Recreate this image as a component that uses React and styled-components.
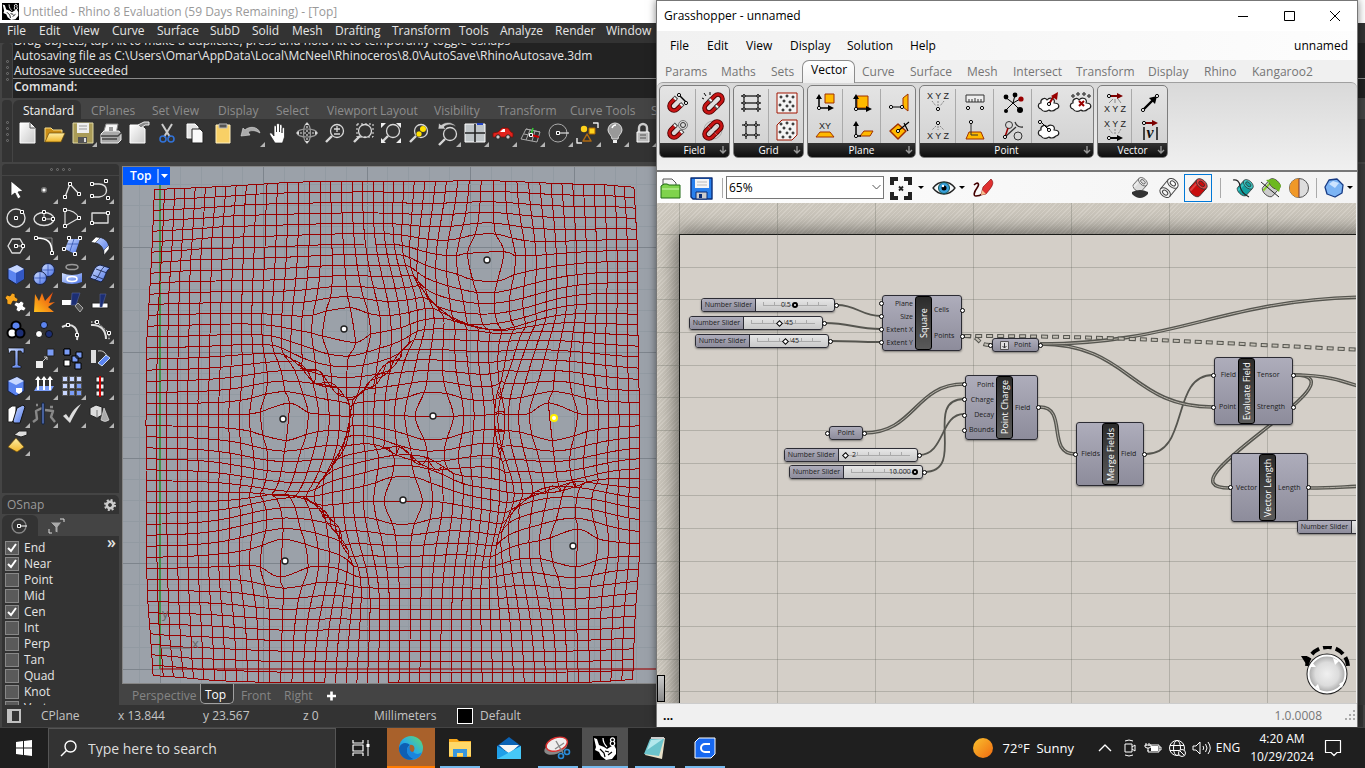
import React from 'react';
import styled, { createGlobalStyle, css } from 'styled-components';

const Global = createGlobalStyle`
  *, *::before, *::after { box-sizing: border-box; }
  html, body { margin: 0; height: 100%; overflow: hidden; background: #1f1f1f; }
  body { font-family: "Open Sans", "Noto Sans", sans-serif; font-size: 12px; line-height: 16px; }
  button, select, input { font: inherit; color: inherit; margin: 0; }
  button { border: 0; padding: 0; background: none; }
`;

/* ---------- shared ---------- */

const Screen = styled.div`
  display: flex;
  flex-direction: column;
  height: 100vh;
`;
const Desktop = styled.main`
  position: relative;
  flex: 1;
  min-height: 0;
  overflow: hidden;
`;
const Glyph = styled.svg`
  display: block;
  flex: none;
  width: 28px;
  height: 28px;
`;
const Icon = ({ children, more }) => (
  <Glyph viewBox="-14 -14 28 28" fill="none" strokeLinejoin="round">
    {children}
    {more && <path d="M14 9v5H9z" fill="#b5b5b5" />}
  </Glyph>
);
const IconButton = styled.button`
  display: flex;
  align-items: center;
  justify-content: center;
  flex: none;
  width: ${(p) => p.$w || 28}px;
  height: ${(p) => p.$h || 28}px;
`;

const Sq = ({ at }) => (
  <>
    {at.map(([x, y]) => (
      <rect key={`${x},${y}`} x={x - 1.5} y={y - 1.5} width="3" height="3" fill="#222" stroke="#fff" />
    ))}
  </>
);
const Dot = ({ at, r = 1.6, fill = '#fff' }) => (
  <>
    {at.map(([x, y]) => (
      <circle key={`${x},${y}`} cx={x} cy={y} r={r} fill={fill} stroke="#000" />
    ))}
  </>
);
const Lens = ({ children }) => (
  <g stroke="#d8d8d8" strokeWidth="1.3">
    <circle cx="2" cy="-2" r="6.5" />
    <path d="M-3 3l-6 6" strokeWidth="2.4" />
    {children}
  </g>
);
const DefsHolder = styled.svg`
  position: absolute;
  width: 0;
  height: 0;
`;
const Gradients = () => (
  <DefsHolder aria-hidden="true">
    <defs>
      <linearGradient id="blue" x1="0" y1="0" x2="1" y2="1">
        <stop offset="0" stopColor="#d3e0ff" />
        <stop offset="1" stopColor="#4a73e8" />
      </linearGradient>
      <linearGradient id="paper" x1="0" y1="0" x2="1" y2="1">
        <stop offset="0" stopColor="#fff" />
        <stop offset="1" stopColor="#c9c9c9" />
      </linearGradient>
      <linearGradient id="gold" x1="0" y1="0" x2="0" y2="1">
        <stop offset="0" stopColor="#fff0a8" />
        <stop offset="1" stopColor="#f0b428" />
      </linearGradient>
      <linearGradient id="fire" x1="0" y1="1" x2="1" y2="0">
        <stop offset="0" stopColor="#ffc21c" />
        <stop offset="1" stopColor="#e8400c" />
      </linearGradient>
      <linearGradient id="edge" x1="0" y1="1" x2="1" y2="0">
        <stop offset="0" stopColor="#1173d4" />
        <stop offset="0.5" stopColor="#29aee4" />
        <stop offset="1" stopColor="#62dc68" />
      </linearGradient>
      <linearGradient id="sun" x1="0" y1="0" x2="1" y2="1">
        <stop offset="0" stopColor="#f9c12e" />
        <stop offset="1" stopColor="#f06a10" />
      </linearGradient>
      <radialGradient id="ball" cx="0.5" cy="0.5" r="0.5">
        <stop offset="0" stopColor="#f0f0f0" />
        <stop offset="0.6" stopColor="#dcdcdc" />
        <stop offset="1" stopColor="#a0a0a0" />
      </radialGradient>
    </defs>
  </DefsHolder>
);

/* ---------- Rhino icons ---------- */

const page = 'M-7-10H3l5 5v15H-7z';
const bar = {
  New: <><path d={page} fill="url(#paper)" stroke="#fff" /><path d="M3-10v5h5" stroke="#555" /></>,
  Open: <><path d="M-10 9V-5h6l2 2h9v4" fill="#c98d17" stroke="#fbe08a" /><path d="M-10 9l4-9h16l-4 9z" fill="url(#gold)" stroke="#6b4a08" strokeWidth=".7" /></>,
  Save: <><path d="M-10-10h20v20h-20z" fill="#a99b57" stroke="#e0d8a5" /><path d="M-6-10H6V0H-6z" fill="#eee" /><path d="M-4-7h8M-4-4h8" stroke="#999" /><path d="M-5 4h9v6h-9z" fill="#555" /><path d="M1 5h2v4H1z" fill="#ddd" /></>,
  Print: <><path d="M-5-9H7L5 1h-13z" fill="#f5f5f5" stroke="#888" /><path d="M-10 1l3-3H8l2 3v6l-3 3h-17z" fill="#aaa" stroke="#eee" /><path d="M-10 3H7l3-3M-9 6H6" stroke="#444" strokeWidth="1.3" /><path d="M-2-6h4v4h-4z" fill="#999" /></>,
  Properties: <><path d="M-9-8H1l5 4v14H-9z" fill="url(#paper)" stroke="#fff" /><path d="M-1-8l6-3h5v3H6l-4 3z" fill="#888" stroke="#eee" /></>,
  Cut: <><path d="M-5-9L3 4M5-9L-3 4" stroke="#ccc" strokeWidth="2" /><circle cx="-4" cy="6" r="3" stroke="#3172d8" strokeWidth="1.6" /><circle cx="4" cy="6" r="3" stroke="#3172d8" strokeWidth="1.6" /></>,
  Copy: <><path d="M-8-9H0l3 3V5H-8z" fill="#e4e4e4" stroke="#fff" /><path d="M-3-4H5l3 3v11H-3z" fill="#fafafa" stroke="#222" /></>,
  Paste: <><path d="M-7-8H7V10H-7z" fill="#f8d066" stroke="#fff0c0" /><path d="M-4-9h8v4h-8z" fill="#555" stroke="#bbb" /></>,
  Undo: <path d="M-10 3l2-8 2 2c4-4 13-4 15 3-5-3-9-3-12-1l2 3z" fill="#aaa" stroke="#ddd" strokeWidth=".6" />,
  Pan: <path d="M-4 10l-5-8c-1-2 1-3 2-1.500l2 2.500v-9c0-2 2-2 2.500 0v5-7c0-2 3-2 3 0v7-6c0-2 2.500-2 2.500 0v7-4c0-2 2.500-2 2.500 0v8l-2 6z" fill="#fff" stroke="#222" strokeWidth=".7" />,
  Rotate: <g stroke="#999" strokeWidth="1.2"><ellipse rx="10" ry="4" /><ellipse rx="3.5" ry="9.500" /><path d="M0-7V7M-7 0H7" stroke="#ddd" strokeDasharray="2 2" /><path d="M-2-8l2-3 2 3zM-2 8l2 3 2-3zM-8-2l-3 2 3 2zM8-2l3 2-3 2z" fill="#ddd" stroke="none" /></g>,
  'Zoom In Out': <Lens><path d="M-1-4h6M2-7v6M-1 1h6" /></Lens>,
  'Zoom Window': <><path d="M-6-9H10V4H-6z" stroke="#eee" strokeDasharray="2 2" /><Lens /></>,
  'Zoom Extents': <><Lens /><path d="M-10-5v-5h5zM10-5v-5H5zM10 5v5H5zM-10 5v5h5z" fill="#eee" /></>,
  'Zoom Selected': <><Lens /><circle cx="4" cy="-4" r="3" fill="#ffe100" /><circle cx="0" cy="1" r="3" fill="#ffe100" stroke="#333" strokeWidth=".6" /></>,
  'Undo View': <><g transform="translate(1 3)"><Lens /></g><path d="M-9-4l1-6 2 2c5-4 13-3 15 2-4-3-9-3-12 0l2 2z" fill="#ccc" stroke="#333" strokeWidth=".6" /></>,
  Viewports: <><path d="M-10-9H10V9H-10z" fill="#bfc5c8" stroke="#fff" /><path d="M0-9V9M-10 0H10" stroke="#222" strokeWidth="1.6" /><path d="M2-9H8" stroke="#2244c4" strokeWidth="2" /></>,
  Render: <><path d="M-10 4v-4l5-1 4-4H5l3 4 2 1v4z" fill="#e0221c" stroke="#7a0c08" strokeWidth=".8" /><path d="M-3-1l3-3h2v3z" fill="#fff" /><circle cx="-5" cy="4" r="2.2" fill="#ccc" stroke="#222" /><circle cx="5" cy="4" r="2.2" fill="#ccc" stroke="#222" /></>,
  CPlane: <><path d="M-10 6l5-10L9-1 6 9zM-7 1L8 4M-5-4L9-1M-1-3l-4 10M4-2L1 8" stroke="#aaa" /><path d="M0 2l8 2" stroke="#c00" strokeWidth="2" /><path d="M0 2l2-7" stroke="#3c3" strokeWidth="1.5" /><Sq at={[[0, 2]]} /></>,
  Circle: <><circle cx="-1" cy="0" r="9" stroke="#aaa" /><path d="M-1 0H10" stroke="#fff" /><Sq at={[[-1, 0]]} /></>,
  Select: <><circle cx="-3" cy="-4" r="3.2" fill="#ffd21c" /><path d="M2-5h6v6H2z" fill="#ffd21c" stroke="#a60" /><path d="M-4 8l4-7 4 7z" stroke="#b06a10" strokeWidth="1.5" /><path d="M6-10h5v5M-10 5v5h5" stroke="#eee" strokeWidth="1.4" /></>,
  Light: <><path d="M-3 6c0-4-4-5-4-9a7 7 0 0114 0c0 4-4 5-4 9z" fill="#999" stroke="#ddd" /><path d="M-2 7h4v3h-4z" fill="#eee" /><path d="M-3-5c1-3 3-3 4-3" stroke="#fff" strokeWidth="1.5" /></>,
  Lock: <><path d="M-4-1v-4a4 4 0 018 0v4" stroke="#ccc" strokeWidth="2.4" /><path d="M-6-1H6V9H-6z" fill="#bbb" stroke="#fff" /><path d="M-3 2h6M-3 5h6" stroke="#555" /></>,
};
const withMore = new Set(['Save', 'Undo', 'Undo View', 'Viewports', 'Render', 'CPlane', 'Circle', 'Select', 'Light', 'Lock']);

const ln = '#ddd';
const tools = [
  ['Pointer', <path d="M-5-9V6l4-3 3 6 3-2-3-5 5-1z" fill="#fff" stroke="#222" strokeWidth=".8" />, 0],
  ['Point', <circle r="2.3" fill="#fff" stroke="#777" strokeWidth="1.5" />],
  ['Polyline', <><path d="M-7 7L-2-6 7 4" stroke={ln} strokeWidth="1.4" /><Sq at={[[-7, 7], [-2, -6], [7, 4]]} /></>],
  ['Curve', <><path d="M-8-6H-1C9-6 9 6-1 7h-7" stroke={ln} strokeWidth="1.4" /><Sq at={[[-8, -6], [6, -9], [8, 8], [-8, 6]]} /></>],
  ['Circle', <><circle r="9" stroke={ln} strokeWidth="1.4" /><Sq at={[[0, 0], [6, -6]]} /></>],
  ['Ellipse', <><ellipse cy="1" rx="10" ry="6.5" stroke={ln} strokeWidth="1.4" /><path d="M0-6V1H9" stroke={ln} /><Sq at={[[0, -6], [0, 1], [9, 1]]} /></>],
  ['Arc', <><path d="M-7-8Q3-8 7 0L-7 8z" stroke={ln} strokeWidth="1.2" /><Sq at={[[-7, -8], [-7, 8], [7, 0]]} /></>],
  ['Rectangle', <><path d="M-8-5H8V5H-8z" stroke={ln} strokeWidth="1.4" /><Sq at={[[8, -5], [-8, 5]]} /></>],
  ['Polygon', <><path d="M-8 0l4-7h8l4 7-4 7h-8z" stroke={ln} strokeWidth="1.4" /><path d="M0 0h7" stroke={ln} /><Sq at={[[0, 0], [7, 0]]} /></>],
  ['Fillet', <><path d="M-8-8H8V7" stroke="#888" /><path d="M-8-8C4-8 8-4 8 7" stroke="#fff" strokeWidth="1.6" /><Sq at={[[-8, -8], [8, 7]]} /></>],
  ['Surface', <><path d="M-3-7L8-7 3 8-7 3z" fill="url(#blue)" /><path d="M2-7l-4 12M-5-2H6" stroke="#2a4aa8" strokeWidth=".7" /><Sq at={[[-3, -8], [8, -8], [3, 8], [-8, 3]]} /></>],
  ['Sweep', <><path d="M-9-4l5-5C4-9 9-5 9 3L4 9C4 1 0-3-9-4z" fill="url(#blue)" stroke="#222" strokeWidth=".8" /><path d="M-9-4l5-5 4 1-5 5zM9 3L4 9V4l5-5z" fill="#fff" stroke="#222" strokeWidth=".5" /></>],
  ['Box', <><path d="M-8-5l9-4 7 4v10l-8 5-8-5z" fill="#5b84f0" stroke="#16224a" /><path d="M-8-5l9-4 7 4-8 4z" fill="#c6d6ff" /><path d="M8-5v10l-8 5V-1z" fill="#3358c4" /></>],
  ['Sphere', <><circle cx="4" cy="-4" r="6.5" fill="url(#blue)" stroke="#16224a" /><circle cx="-4" cy="4" r="6.5" fill="url(#blue)" stroke="#16224a" /><path d="M-10 4h12M-4-2v12M-2-4h12M4-10V2" stroke="#2c4cae" strokeWidth=".7" /></>],
  ['Cylinder', <><ellipse cy="-7" rx="6" ry="2.6" stroke="#999" strokeWidth="1.5" /><path d="M-10-1Q0 3 10-1V8Q0 12-10 8z" fill="url(#blue)" /><ellipse cy="5" rx="5" ry="2.5" stroke="#fff" strokeWidth="1.6" /></>],
  ['Patch', <><path d="M-10 4C-7-1-6-8 0-9l10 3C5-3 6 4 1 8z" fill="url(#blue)" stroke="#16224a" /><path d="M-7 1l10 4M-4-5L7-1M4-7C0-4 0 2-5 6" stroke="#16224a" strokeWidth=".8" /></>],
  ['Boolean', <><path d="M-9-7l3 1 2-3 3 1v3l3 2-1 3-4-1-2 4-4-1V-2l-2-2z" fill="#f8a51c" stroke="#222" strokeWidth=".7" /><path d="M0 0l3 1 2-2 3 2-1 3 3 2-2 3-3-1-2 2-3-2 1-3-3-2z" fill="#fff" stroke="#222" strokeWidth=".7" /></>],
  ['Explode', <path d="M-10 10L-9-8l4 7L-2-9l3 8 8-9-4 11 6-1-7 5 6 5z" fill="url(#fire)" />, 0],
  ['Trim', <><path d="M-10-2H2V3h-12z" fill="#fff" /><path d="M0-9H8L4 3H-1z" fill="#1c2e74" stroke="#56639a" strokeWidth=".6" /><path d="M3 4l3-3 5 5-3 4z" fill="#555" stroke="#aaa" /></>, 0],
  ['Split', <><path d="M-8 1H8V6H-8z" fill="#fff" stroke="#222" /><path d="M0-8H6L2 5H0z" fill="#1c2e74" stroke="#56639a" strokeWidth=".6" /></>, 0],
  ['Group', <><circle cy="-4" r="4.5" fill="#5b84f0" stroke="#000" strokeWidth="2" /><circle cx="-4" cy="3" r="4.5" fill="#fff" stroke="#000" strokeWidth="2" /><circle cx="4" cy="3" r="4.5" fill="#1c2e74" stroke="#000" strokeWidth="2" /></>],
  ['Ungroup', <><circle cy="-5" r="3.5" fill="#5b84f0" stroke="#111" /><circle cx="-5" cy="4" r="3.5" fill="#fff" stroke="#111" /><circle cx="5" cy="4" r="3.5" fill="#1c2e74" stroke="#111" /></>, 0],
  ['Edit points', <><path d="M-10-3C2-9 7 0 5 10" stroke="#ddd" strokeWidth="2" /><Sq at={[[-4, -5], [5, 5]]} /></>, 0],
  ['Control points', <><path d="M-9-5C0-6 6 0 6 9" stroke="#ddd" strokeWidth="2" /><path d="M-9-8h6l12 11v7" stroke="#fff" strokeDasharray="1.5 1.5" /><Sq at={[[-3, -8], [9, 3]]} /></>],
  ['Text', <path d="M-8-10H8v5H6L5-7H2V7l3 1v2h-9V8l3-1V-7h-4l-2 3z" fill="url(#blue)" stroke="#111" strokeWidth=".7" />, 0],
  ['Move', <><path d="M3-9H10V-2H3z" fill="#7a9cf6" stroke="#222" /><path d="M-8 3h7v7h-7z" fill="#eee" /><path d="M-1 3l4-4m-3 0h3v3" stroke="#ccc" /></>],
  ['Copy', <><path d="M-8-9h6v6h-6zM-8 2h6v6h-6z" fill="#fff" stroke="#000" /><path d="M-8-9h6v6h-6zM4-6h6v6H4zM0-2h6v6H0zM3 5h6v6H3z" fill="#7a9cf6" stroke="#000" /></>, 0],
  ['Rotate', <><path d="M-9-8h5V5h-5z" fill="#ddd" /><path d="M-2-7C3-8 6-5 7-1" stroke="#ccc" /><path d="M-2 5L6-3l4 3-8 8z" fill="#5b84f0" stroke="#cde" /></>],
  ['Solid edit', <><path d="M-8-5l9-4 7 4v10l-8 5-8-5z" fill="#5b84f0" stroke="#16224a" /><path d="M-8-5l9-4 7 4-8 4z" fill="#c6d6ff" /><path d="M0 2h6v4l-3 2-3-2z" fill="#fff" /></>],
  ['Extrude', <><path d="M-10 5h17l3-5H-7z" fill="#7a9cf6" /><path d="M-6 4V-7M0 4V-7M6 4V-7" stroke="#fff" strokeWidth="2" /><path d="M-9-6l3-4 3 4zM-3-6l3-4 3 4zM3-6l3-4 3 4z" fill="#fff" /></>],
  ['Array', <g stroke="#555">{[-7, 0, 7].map((x) => [-7, 0, 7].map((y) => <rect key={x + '_' + y} x={x - 2.5} y={y - 2.5} width="5" height="5" fill={x + y > 0 ? '#7a9cf6' : '#c8d6ff'} />))}</g>],
  ['Align', <><path d="M-4-9h8v5h-8zM-4-2h8v5h-8zM-4 5h8v5h-8z" fill="#eee" stroke="#222" /><path d="M0-10V11" stroke="#d00000" strokeWidth="2" /></>],
  ['Layers', <><path d="M-8-5l4-3h4v12l-4 4h-4z" fill="#fff" stroke="#222" /><path d="M1-6l6-3 2 2L4 9-2 9l-1-2z" fill="url(#blue)" stroke="#111" /></>],
  ['Dimension', <><path d="M-11 8l4-3-1-8 6-3M11 8l-4-5 2-6-8-1M-8-9h2M6-7h3" stroke="#888" strokeWidth="2.4" /><path d="M-2-11H0V10h-2z" fill="#7a9cf6" stroke="#124" /></>],
  ['Check', <path d="M-9 2l3-2 3 4C0-3 4-7 9-10 4-3 1 3-2 9z" fill="#ddd" />],
  ['Primitives', <><path d="M-10-6l6-3 6 2v8l-5 3-7-3z" fill="#ddd" stroke="#222" /><path d="M-3-4v8" stroke="#777" /><path d="M4-6l5 12q-4 3-8 0z" fill="#aaa" stroke="#eee" strokeWidth=".6" /></>],
  ['Pyramid', <><path d="M-8 5L0-4l8 9-7 5z" fill="url(#gold)" stroke="#6b4a08" strokeWidth=".7" /><path d="M-2-7l5-4h8v4L5-5z" fill="#ddd" stroke="#222" /></>],
];

const RhinoMark = ({ size }) => (
  <svg width={size} height={size} viewBox="0 0 24 24" aria-hidden="true">
    <path d="M0 0h24v24H0z" fill="#000" />
    <path d="M1 2l3 1 2 6 5 2 3 2 5-3 1-3 3 6v5l-4 5-6 1-5-4-2-4-4-2 1-3z" fill="#fff" />
    <path d="M7 13l4 4 1 4M12 15l4 1M15 19l4-3" stroke="#000" strokeWidth="1.200" fill="none" />
    <path d="M10 2c0 5 2 7 4 9" stroke="#fff" strokeWidth="1.200" fill="none" />
    <path d="M18.500 5.500a2 1.900 0 112 0 2.200 2.200 0 11-2 0z" stroke="#fff" strokeWidth="1.300" fill="#000" />
  </svg>
);

/* ---------- Rhino window ---------- */

const Rhino = styled.section`
  display: flex;
  flex-direction: column;
  height: 100%;
  background: #444;
  color: #e6e6e6;
`;
const RhinoTitle = styled.header`
  display: flex;
  align-items: center;
  gap: 4px;
  height: 23px;
  flex: none;
  padding-left: 2px;
  background: #fff;
  color: #999;
`;
const MenuBar = styled.nav`
  display: flex;
  align-items: center;
  flex: none;
  height: 20px;
  padding: 0 0 4px 7px;
  background: #333;
`;
const MenuItem = styled.button`
  flex: none;
  width: ${(p) => p.$w}px;
  text-align: left;
  white-space: nowrap;
`;
const Band = styled.div`
  display: flex;
  flex: none;
  height: ${(p) => p.$h}px;
  margin-bottom: 2px;
  padding-left: 2px;
`;
const Grip = styled.div`
  display: flex;
  flex-direction: ${(p) => (p.$row ? 'row' : 'column')};
  align-items: center;
  justify-content: center;
  gap: 3px;
  flex: none;
  width: ${(p) => (p.$row ? 'auto' : '10px')};
  height: ${(p) => (p.$row ? '11px' : 'auto')};
  margin: ${(p) => (p.$row ? '0 0 1px' : '0 1px 0 0')};
  border-radius: 4px 4px 0 0;
  background: #333;
  i { width: 3px; height: 3px; border: 1px solid #777; border-radius: 50%; }
`;
const GripDots = ({ row }) => <Grip $row={row}><i /><i /><i /><i /></Grip>;
const CommandArea = styled.div`
  display: flex;
  flex-direction: column;
  flex: 1;
  background: #222;
  line-height: 15px;
  white-space: nowrap;
`;
const History = styled.div`
  display: flex;
  flex-direction: column;
  justify-content: flex-end;
  height: 36px;
  padding-left: 1px;
  overflow: hidden;
  border-bottom: 1px solid #8a8a8a;
`;
const Prompt = styled.label`
  padding: 0 1px;
  font-weight: 600;
  input { border: 0; outline: 0; padding: 0; background: transparent; width: 60%; height: 15px; }
`;
const ToolTabs = styled.div`
  display: flex;
  height: 19px;
  align-items: stretch;
`;
const ToolTab = styled.button`
  flex: none;
  width: ${(p) => p.$w}px;
  padding: 2px 0 0 10px;
  text-align: left;
  white-space: nowrap;
  border-radius: 6px 6px 0 0;
  color: ${(p) => (p.$on ? '#f2f2f2' : '#8c8c8c')};
  background: ${(p) => (p.$on ? '#333' : 'transparent')};
`;
const ToolColumn = styled.div`
  flex: 1;
  min-width: 0;
  overflow: hidden;
`;
const ToolRow = styled.div`
  display: flex;
  height: 44px;
  background: #333;
`;
const Work = styled.div`
  display: flex;
  flex: 1;
  min-height: 0;
`;
const Side = styled.aside`
  display: flex;
  flex-direction: column;
  flex: none;
  width: 117px;
  margin: 0 3px 0 2px;
`;
const ToolBox = styled.div`
  display: grid;
  grid-template-columns: repeat(4, 28px);
  align-content: start;
  flex: none;
  height: 317px;
  background: #333;
`;
const SnapHead = styled.div`
  display: flex;
  align-items: center;
  justify-content: space-between;
  height: 19px;
  flex: none;
  margin-top: 2px;
  padding: 0 3px 0 5px;
  border-radius: 5px 5px 0 0;
  background: #333;
  color: #9a9a9a;
`;
const SnapTabs = styled.div`
  display: flex;
  flex: none;
  height: 21px;
  margin-top: 1px;
`;
const SnapTab = styled.button`
  display: flex;
  align-items: center;
  justify-content: center;
  width: 36px;
  border-radius: 6px 6px 0 0;
  background: ${(p) => (p.$on ? '#333' : 'transparent')};
`;
const SnapList = styled.div`
  position: relative;
  flex: 1;
  min-height: 0;
  overflow: hidden;
  padding: 4px 3px;
  background: #333;
`;
const SnapRow = styled.label`
  display: flex;
  align-items: center;
  gap: 5px;
  height: 16px;
  input {
    appearance: none;
    width: 14px;
    height: 14px;
    border: 1px solid #888;
    background: #5a5a5a;
  }
  input:checked {
    background: #5a5a5a url("data:image/svg+xml,%3Csvg xmlns='http://www.w3.org/2000/svg' viewBox='0 0 12 12'%3E%3Cpath d='M2 6l3 3 5-7' fill='none' stroke='white' stroke-width='2'/%3E%3C/svg%3E");
  }
`;
const Chevrons = styled.button`
  position: absolute;
  top: 0;
  right: 3px;
  font-size: 16px;
  font-weight: 600;
  line-height: 12px;
`;
const ViewColumn = styled.div`
  display: flex;
  flex-direction: column;
  flex: 1;
  min-width: 0;
`;
const Viewport = styled.div`
  position: relative;
  flex: 1;
  min-height: 0;
  margin-top: 2px;
  overflow: hidden;
  border: 1px solid #858585;
  background: #9ba1a9;
`;
const Drawing = styled.svg`
  position: absolute;
  inset: 0;
  width: 100%;
  height: 100%;
`;
const ViewTag = styled.button`
  position: absolute;
  top: 0;
  left: 0;
  display: flex;
  align-items: center;
  gap: 5px;
  width: 47px;
  height: 18px;
  padding-left: 7px;
  background: #0058ff;
  color: #fff;
  font-weight: 600;
`;
const ViewTabs = styled.div`
  display: flex;
  flex: none;
  height: 21px;
  padding-left: 3px;
`;
const ViewTab = styled.button`
  width: ${(p) => p.$w}px;
  height: 20px;
  padding: 3px ${(p) => (p.$on ? 4 : 7)}px 0;
  text-align: left;
  color: #858585;
  ${(p) => p.$on && css`
    border: 1px solid #a0a0a0;
    border-top: 0;
    border-radius: 0 0 5px 5px;
    background: #333;
    color: #fff;
  `}
`;
const RightDock = styled.aside`
  flex: none;
  width: 320px;
  background: #3a3a3a;
`;
const StatusBar = styled.footer`
  display: flex;
  align-items: center;
  flex: none;
  height: 22px;
  margin: 0 2px 1px;
  background: #333;
  color: #c4c4c4;
`;
const StatusCell = styled.span`
  display: flex;
  align-items: center;
  flex: none;
  gap: 7px;
  width: ${(p) => p.$w}px;
`;
const Swatch = styled.i`
  width: 16px;
  height: 16px;
  border: 1px solid #fff;
  background: #000;
`;
const PanelMark = styled.i`
  width: 14px;
  height: 14px;
  margin-left: 5px;
  border: 2px solid #c0c0c0;
  border-left-width: 5px;
`;

const charges = [[487, 260], [344, 329], [283, 419], [433, 416], [554, 418], [403, 500], [285, 561], [573, 546]];
const origin = [160, 669];
const reach = 14;

function displaced(i, j) {
  const x = origin[0] + i * 10.35;
  const y = origin[1] - j * 10.54;
  let fx = 0;
  let fy = 0;
  for (const [cx, cy] of charges) {
    const dx = x - cx;
    const dy = y - cy;
    const d = Math.hypot(dx, dy) + 0.01;
    fx += dx / d ** 3;
    fy += dy / d ** 3;
  }
  const f = Math.hypot(fx, fy);
  const k = Math.min(reach, f * 110000) / f;
  return [x + fx * k, y + fy * k];
}

// Catmull-Rom spline through the displaced points of one grid line
function spline(list) {
  const at = (n) => list[Math.max(0, Math.min(list.length - 1, n))];
  const f = (v) => v.toFixed(1);
  let d = `M${f(list[0][0])} ${f(list[0][1])}`;
  for (let n = 0; n < list.length - 1; n += 1) {
    const [p0, p1, p2, p3] = [at(n - 1), at(n), at(n + 1), at(n + 2)];
    d += `C${f(p1[0] + (p2[0] - p0[0]) / 6)} ${f(p1[1] + (p2[1] - p0[1]) / 6)} ${f(p2[0] - (p3[0] - p1[0]) / 6)} ${f(p2[1] - (p3[1] - p1[1]) / 6)} ${f(p2[0])} ${f(p2[1])}`;
  }
  return d;
}

const steps = Array.from({ length: 46 }, (_, n) => n);
const meshLines = [
  ...steps.map((i) => spline(steps.map((j) => displaced(i, j)))),
  ...steps.map((j) => spline(steps.map((i) => displaced(i, j)))),
];
const range = (from, to) => Array.from({ length: to - from + 1 }, (_, n) => from + n);

const Scene = () => (
  <Drawing>
    <g transform="translate(-123 -167)">
      <g shapeRendering="crispEdges">
        {range(-1, 48).map((n) => <path key={n} d={`M${origin[0] + n * 20.7} 160V700`} stroke={n % 5 ? '#929aa2' : '#7d848c'} />)}
        {range(0, 24).map((n) => <path key={n} d={`M120 ${origin[1] - n * 21.08}H1200`} stroke={n % 5 ? '#929aa2' : '#7d848c'} />)}
      </g>
      <path d="M160 166V669" stroke="#43934a" strokeWidth="2" />
      <path d="M160 669H1200" stroke="#9b4a4e" strokeWidth="2" />
      <g fill="none" stroke="#990000" shapeRendering="crispEdges">
        {meshLines.map((d, n) => <path key={n} d={d} />)}
      </g>
      <path d="M160 648H190" stroke="#666" />
      <text x="162" y="618" fontSize="13" fill="#666">y</text>
      <text x="192" y="648" fontSize="13" fill="#666">x</text>
      {charges.map(([x, y]) => (
        <circle key={x} cx={x} cy={y} r="3" fill="#fff" stroke={x === 554 ? '#ffef00' : '#222'} strokeWidth={x === 554 ? 2 : 1.4} />
      ))}
    </g>
  </Drawing>
);

const rhinoMenu = [['File', 32], ['Edit', 34], ['View', 39], ['Curve', 45], ['Surface', 53], ['SubD', 42], ['Solid', 40], ['Mesh', 43], ['Drafting', 57], ['Transform', 67], ['Tools', 41], ['Analyze', 55], ['Render', 51], ['Window', 50]];
const rhinoTabs = [['Standard', 68], ['CPlanes', 61], ['Set View', 66], ['Display', 58], ['Select', 51], ['Viewport Layout', 107], ['Visibility', 64], ['Transform', 72], ['Curve Tools', 81], ['Surface Tools', 90]];
const snaps = ['End', 'Near', 'Point', 'Mid', 'Cen', 'Int', 'Perp', 'Tan', 'Quad', 'Knot', 'Vertex'];

const RhinoWindow = () => (
  <Rhino>
    <RhinoTitle><RhinoMark size={17} />Untitled - Rhino 8 Evaluation (59 Days Remaining) - [Top]</RhinoTitle>
    <MenuBar>{rhinoMenu.map(([t, w]) => <MenuItem key={t} $w={w}>{t}</MenuItem>)}</MenuBar>
    <Band $h={55}>
      <GripDots />
      <CommandArea>
        <History>
          <div>Drag objects, tap Alt to make a duplicate, press and hold Alt to temporarily toggle osnaps</div>
          <div>Autosaving file as C:\Users\Omar\AppData\Local\McNeel\Rhinoceros\8.0\AutoSave\RhinoAutosave.3dm</div>
          <div>Autosave succeeded</div>
        </History>
        <Prompt>Command: <input type="text" /></Prompt>
      </CommandArea>
    </Band>
    <Band $h={62}>
      <GripDots />
      <ToolColumn>
        <ToolTabs>{rhinoTabs.map(([t, w], n) => <ToolTab key={t} $w={w} $on={n === 0}>{t}</ToolTab>)}</ToolTabs>
        <ToolRow>
          {Object.entries(bar).map(([name, art]) => (
            <IconButton key={name} aria-label={name}><Icon more={withMore.has(name)}>{art}</Icon></IconButton>
          ))}
        </ToolRow>
      </ToolColumn>
    </Band>
    <Work>
      <Side>
        <GripDots row />
        <ToolBox>
          {tools.map(([name, art, more]) => (
            <IconButton key={name + more} aria-label={name}><Icon more={more !== 0}>{art}</Icon></IconButton>
          ))}
        </ToolBox>
        <SnapHead>
          OSnap
          <svg width="12" height="12" viewBox="-6 -6 12 12"><circle r="3.2" stroke="#ccc" strokeWidth="2.6" fill="none" /><circle r="5" stroke="#ccc" strokeWidth="2" strokeDasharray="2 1.93" fill="none" /></svg>
        </SnapHead>
        <SnapTabs>
          <SnapTab $on aria-label="Snaps"><Icon><circle cx="-1" r="7" stroke="#888" strokeWidth="1.3" /><path d="M-1 0h8" stroke="#fff" /><Sq at={[[-1, 0]]} /></Icon></SnapTab>
          <SnapTab aria-label="Filters"><Icon><path d="M-6-4H6L2 1v6l-3-1V1z" fill="#aaa" stroke="#444" /><path d="M4-7h4v3M-7 3v4h3" stroke="#ddd" /></Icon></SnapTab>
        </SnapTabs>
        <SnapList>
          {snaps.map((s) => (
            <SnapRow key={s}><input type="checkbox" defaultChecked={['End', 'Near', 'Cen'].includes(s)} />{s}</SnapRow>
          ))}
          <Chevrons>»</Chevrons>
        </SnapList>
      </Side>
      <ViewColumn>
        <Viewport>
          <Scene />
          <ViewTag>Top<svg width="13" height="16"><path d="M1 1v14" stroke="#fff" /><path d="M4 6h7l-3.500 4z" fill="#fff" /></svg></ViewTag>
        </Viewport>
        <ViewTabs>
          <ViewTab $w={75}>Perspective</ViewTab>
          <ViewTab $w={34} $on>Top</ViewTab>
          <ViewTab $w={43}>Front</ViewTab>
          <ViewTab $w={41}>Right</ViewTab>
          <IconButton aria-label="Add view" $h={23}><Icon><path d="M-5 0h9M-.500-4.500v9" stroke="#fff" strokeWidth="2.600" /></Icon></IconButton>
        </ViewTabs>
      </ViewColumn>
      <RightDock />
    </Work>
    <StatusBar>
      <StatusCell $w={39}><PanelMark /></StatusCell>
      <StatusCell $w={77}>CPlane</StatusCell>
      <StatusCell $w={85}>x 13.844</StatusCell>
      <StatusCell $w={100}>y 23.567</StatusCell>
      <StatusCell $w={71}>z 0</StatusCell>
      <StatusCell $w={83}>Millimeters</StatusCell>
      <StatusCell $w={80}><Swatch />Default</StatusCell>
    </StatusBar>
  </Rhino>
);

/* ---------- Grasshopper icons ---------- */

const or = '#ffb900';
const horseshoe = 'M6-4.500H0a4.500 4.500 0 000 9H6';
const Magnet = ({ x = 0, y = 0, turn = -45, tips = true }) => (
  <g transform={`translate(${x} ${y}) rotate(${turn})`}>
    <path d={horseshoe} stroke="#4c0000" strokeWidth="4.600" />
    <path d={horseshoe} stroke="#c81414" strokeWidth="2.800" />
    {tips && <path d="M5-4.500h3M5 4.500h3" stroke="#444" strokeWidth="4.600" />}
    {tips && <path d="M5-4.500h2M5 4.500h2" stroke="#f4f4f4" strokeWidth="3" />}
  </g>
);
const Cloud = () => <path d="M-8 6c-4-1-3-6 0-6-1-4 4-6 6-3 3-4 9-1 7 3 6 0 6 5 2 6-3 3-6 2-7 1-3 2-6 2-8-1z" fill="#fff" stroke="#222" strokeWidth="1.200" />;
const Letters = ({ y, children }) => <text x="0" y={y} textAnchor="middle" fontSize="9" fill="#222" fontFamily="Liberation Sans, sans-serif">{children}</text>;
const RedArrow = ({ y, fill = '#7c0000' }) => <><path d={`M-6 ${y}h9`} stroke={fill} strokeWidth="2" /><path d={`M2 ${y - 3}l6 3-6 3z`} fill={fill} /><Dot at={[[-6, y]]} /></>;
const dots = [[-6, -6], [0, -7], [6, -6], [-3, -2], [3, -1], [-7, 2], [0, 3], [6, 3], [-4, 7], [3, 7]];

const groups = [
  ['Field', '36px 35px', [
    ['Line Charge', <><Magnet x={-4} y={3} /><path d="M1-8l7 7" stroke="#000" strokeWidth="1.400" /><Dot at={[[1, -8], [8, 0]]} /></>],
    ['Break Field', <><Magnet x={-4} y={5} /><Magnet x={5} y={-4} turn={135} /><path d="M-9-4l-2-1M-7-7l-2-3M-3-8V-11" stroke="#000" /></>],
    ['Point Charge', <><Magnet x={-4} y={3} /><circle cx="5" cy="-5" r="4.500" stroke="#777" /><circle cx="5" cy="-5" r="2.500" stroke="#333" /></>],
    ['Merge Fields', <><circle r="9" stroke="#aaa" /><circle r="6" stroke="#bbb" /><Magnet x={-4} y={4} /><Magnet x={4} y={-4} turn={135} tips={false} /></>],
  ]],
  ['Grid', '35px 36px', [
    ['Rectangular', <><path d="M-10-7H10M-10 0H10M-10 6H10M-7-9V9M7-9V9" stroke="#333" strokeWidth="1.400" /><Dot at={[[-7, -7], [7, -7], [-7, 0], [7, 0], [-7, 6], [7, 6]]} r={1.2} /></>],
    ['Populate 2D', <><path d="M-10-10H10V10H-10z" fill="#f4f4f4" stroke="#a01400" /><Dot at={dots} r={1} /></>],
    ['Square', <><path d="M-9-5H9M-9 5H9M-5-9V9M5-9V9" stroke="#333" strokeWidth="1.400" /><Dot at={[[-5, -5], [5, -5], [-5, 5], [5, 5]]} r={1.3} /></>],
    ['Populate Geometry', <><path d="M-10-5l5-5H10V5l-5 5H-10z" fill="#f4f4f4" stroke="#a01400" /><Dot at={dots} r={1} /></>],
  ]],
  ['Plane', '35px 38px 36px', [
    ['Construct Plane', <><path d="M0-9H9V0H0z" fill={or} stroke="#a03000" /><path d="M-6 5v-9M-6 5H5" stroke="#000" strokeWidth="1.500" /><path d="M-9-4l3-5 3 5zM3 2l6 3-6 3z" fill="#000" /><Dot at={[[-6, 5]]} /></>],
    ['Plane Origin', <><path d="M-5-7H6V5H-5z" fill={or} stroke="#a03000" /><path d="M-6 6v-12M-6 6H6" stroke="#000" strokeWidth="1.500" /><path d="M-9-4l3-5 3 5zM4 3l6 3-6 3z" fill="#000" /><Dot at={[[-6, 6]]} /></>],
    ['Plane Normal', <><path d="M4-5l5-4V8L4 4z" fill={or} stroke="#a03000" /><path d="M-8 4H2" stroke="#000" /><Dot at={[[-8, 4], [3, 4]]} /></>],
    ['XY Plane', <><path d="M-9 7l4-5H5l4 5z" fill={or} stroke="#a03000" /><Letters y={-1}>XY</Letters></>],
    ['Offset Plane', <><path d="M-2 6l4-5h9L8 6z" fill={or} stroke="#a03000" /><path d="M-6 6v-12M-6 6h5" stroke="#000" strokeWidth="1.500" /><path d="M-9-4l3-5 3 5z" fill="#000" /><Dot at={[[-6, 6]]} /></>],
    ['Rotate Plane', <><path d="M-9 1l8-7 8 7-8 8z" fill={or} stroke="#a03000" strokeWidth="1.500" /><path d="M-1 1l11-9M5-7l4 8" stroke="#000" strokeWidth="1.200" /><Dot at={[[-1, 1]]} /></>],
  ]],
  ['Point', '36px 38px 38px 35px 28px', [
    ['Construct Point', <><Letters y={-4}>X Y Z</Letters><path d="M-6-2l4 5M0-2v5M6-2L2 3" stroke="#888" strokeDasharray="2 1" /><Dot at={[[0, 6]]} /></>],
    ['Distance', <><path d="M-9-8H9v7H-9z" fill="#eee" stroke="#333" /><path d="M-6-1v-3M-3-1v-3M0-1v-4M3-1v-3M6-1v-3" stroke="#333" /><Dot at={[[-7, 5], [7, 5]]} /></>],
    ['Closest Points', <><path d="M0 0l-8-6M0 0l2-8M0 0l9-5M0 0l-8 8M0 0l7 7" stroke="#000" /><circle cx="-7" cy="-6" r="2.400" fill="#000" /><circle cx="2" cy="-8" r="2.400" fill="#000" /><circle cx="8" cy="-4" r="2.600" fill="#900" /><circle cx="-7" cy="8" r="2" fill="#000" /><circle cx="7" cy="7" r="3" fill="#000" /></>],
    ['Cloud Pull', <><Cloud /><path d="M0 1l5-8" stroke="#900" strokeWidth="2" /><path d="M2-7l7-4-1 8z" fill="#900" /><Dot at={[[0, 1]]} /></>],
    ['Cull Cloud', <><Cloud /><path d="M-2-2l5 5M3-2l-5 5" stroke="#900" strokeWidth="2" /><Dot at={[[-8, -7], [-3, -9], [3, -9], [8, -7]]} r={1.2} /></>],
    ['Deconstruct', <><Letters y={9}>X Y Z</Letters><path d="M-2-4l-4 4M0-4v4M2-4l4 4" stroke="#888" strokeDasharray="2 1" /><Dot at={[[0, -7]]} /></>],
    ['Project Point', <><path d="M-9 9l3-7H6l3 7z" fill={or} stroke="#a03000" /><path d="M-4-7v12h7" stroke="#333" /><Dot at={[[-4, -8]]} /></>],
    ['To Polar', <><circle cx="-4" cy="-5" r="3.500" stroke="#333" /><circle cx="5" cy="6" r="4" stroke="#333" /><path d="M-8 7l3-9" stroke="#900" strokeWidth="1.600" /><path d="M-8 7L3-3M2-8q2 6 8 5" stroke="#333" strokeWidth="1.300" /><Dot at={[[-8, 7]]} /></>],
    ['Pull Point', <><Cloud /><path d="M-9-9L0 0" stroke="#000" /><Dot at={[[-9, -8], [0, 0]]} /></>],
  ]],
  ['Vector', '34px 37px', [
    ['Vector XYZ', <><RedArrow y={-7} /><path d="M-2-4l-4 4M0-4v4M3-4l3 4" stroke="#888" /><Letters y={9}>X Y Z</Letters></>],
    ['Vector 2Pt', <><path d="M-7 7L4-4" stroke="#000" strokeWidth="2.400" /><path d="M-1-5l8-2-2 8z" fill="#000" /><Dot at={[[-7, 7], [7, -7]]} /></>],
    ['Deconstruct Vector', <><Letters y={-3}>X Y Z</Letters><path d="M-6-1l4 5M0-1v5M6-1L3 4" stroke="#888" strokeDasharray="2 1" /><RedArrow y={8} fill="#000" /></>],
    ['Vector Length', <><RedArrow y={-7} /><text x="0" y="8" textAnchor="middle" fontSize="16" fontWeight="bold" fontStyle="italic" fontFamily="Liberation Serif, serif" fill="#111">v</text><path d="M-6-3v13M7-3v13" stroke="#000" strokeWidth="1.400" /></>],
  ]],
];

const Can = ({ fill, top }) => (
  <g transform="rotate(42)">
    <path d="M-6.500-5V5a6.500 3.500 0 0013 0V-5z" fill={fill} stroke="#333" strokeWidth=".8" />
    <path d="M-4-3V7" stroke={top} strokeWidth="2" />
    <ellipse cy="-5.500" rx="6.500" ry="4" fill={top} stroke="#333" strokeWidth=".8" />
    <ellipse cy="-5.500" rx="3.500" ry="2" fill={fill} stroke="#333" strokeWidth=".8" />
  </g>
);

/* ---------- Grasshopper window ---------- */

const Grasshopper = styled.section`
  position: absolute;
  top: 0;
  left: 656px;
  right: 7px;
  bottom: 1px;
  display: flex;
  flex-direction: column;
  border: 1px solid #777;
  border-width: 1px 1px 0 1px;
  background: #f0f0f0;
  color: #000;
  box-shadow: 0 0 8px rgba(0, 0, 0, 0.5);
`;
const GhTitle = styled.header`
  display: flex;
  align-items: center;
  flex: none;
  height: 30px;
  padding-left: 7px;
  background: #fff;
  span { flex: 1; }
`;
const WinButton = styled.button`
  display: flex;
  align-items: center;
  justify-content: center;
  width: 46px;
  height: 30px;
`;
const GhMenu = styled.nav`
  display: flex;
  align-items: center;
  flex: none;
  height: 29px;
  padding: 0 9px 0 13px;
  background: linear-gradient(90deg, #f1f1f1, #fdfdfd);
  span { margin-left: auto; }
`;
const GhTabs = styled.div`
  display: flex;
  align-items: flex-end;
  flex: none;
  height: 22px;
  padding-left: 8px;
`;
const GhTab = styled.button`
  flex: none;
  width: ${(p) => p.$w}px;
  height: 20px;
  text-align: left;
  white-space: nowrap;
  color: #757575;
  ${(p) => p.$on && css`
    height: 23px;
    margin: 0 7px -1px -8px;
    padding: 0 0 4px 8px;
    border: 1px solid #8c8c8c;
    border-bottom: 0;
    border-radius: 7px 7px 0 0;
    background: linear-gradient(#fff, #efefef);
    color: #000;
    z-index: 1;
  `}
`;
const Ribbon = styled.div`
  display: flex;
  gap: 3px;
  flex: none;
  height: 88px;
  padding: 2px;
  border-top: 1px solid #a0a0a0;
  border-radius: 6px 6px 0 0;
  background: linear-gradient(#d9d9d9, #f0f0f0);
`;
const Group = styled.div`
  display: flex;
  flex-direction: column;
  height: 73px;
  overflow: hidden;
  border: 1px solid #7d7d7d;
  border-radius: 5px;
  background: linear-gradient(#e4e4e4, #cfcfcf);
`;
const GroupTools = styled.div`
  display: grid;
  grid-template-columns: ${(p) => p.$cols};
  grid-auto-rows: 27px;
  padding: 3px 0 1px;
  height: 57px;
  margin-right: -2px;
`;
const GroupTool = styled.button`
  display: flex;
  align-items: center;
  justify-content: center;
  border-right: 1px solid ${(p) => (p.$line ? '#aaa' : 'transparent')};
`;
const GroupLabel = styled.div`
  display: flex;
  align-items: center;
  flex: 1;
  padding-right: 2px;
  background: linear-gradient(#333, #0e0e0e);
  color: #fff;
  font-size: 10px;
  line-height: 12px;
  span { flex: 1; text-align: center; padding-left: 10px; }
`;
const CanvasBar = styled.div`
  display: flex;
  align-items: center;
  flex: none;
  height: 33px;
  border-top: 2px solid #777;
  background: linear-gradient(90deg, #fdfdfd, #f3f3f3);
`;
const Divider = styled.i`
  width: 1px;
  height: 20px;
  margin: 0 ${(p) => p.$gap || 4}px;
  background: #aaa;
`;
const Zoom = styled.div`
  position: relative;
  width: 158px;
  height: 23px;
  select {
    appearance: none;
    width: 100%;
    height: 100%;
    padding: 0 2px;
    border: 1px solid #777;
    border-radius: 0;
    background: #fff;
    font-size: 12px;
  }
  svg { position: absolute; right: 3px; top: 8px; pointer-events: none; }
`;
const Caret = styled.i`
  margin-right: ${(p) => p.$gap || 0}px;
  border: 3px solid transparent;
  border-top-color: #000;
  border-bottom: 0;
`;
const PreviewButton = styled(IconButton)`
  border: 1px solid ${(p) => (p.$on ? '#0078d7' : 'transparent')};
`;
const Push = styled.span`
  flex: 1;
`;
const Canvas = styled.div`
  position: relative;
  flex: 1;
  min-height: 0;
  margin-right: 1px;
  overflow: hidden;
  background: repeating-linear-gradient(135deg, #d6d1c8 0 1px, #cbc6bc 1px 3px);
`;
const Sheet = styled.div`
  position: absolute;
  inset: 31px -60px -60px 22px;
  border: 1px solid #000;
  background: #d4cfc8;
  box-shadow: 0 0 18px 3px rgba(0, 0, 0, 0.5);
`;
const GridLines = styled.div`
  position: absolute;
  inset: 0;
  background:
    linear-gradient(90deg, rgba(90, 95, 85, 0.28) 1px, transparent 1px) 22px 31px / 98px 98px,
    linear-gradient(rgba(90, 95, 85, 0.28) 1px, transparent 1px 33px, rgba(90, 95, 85, 0.28) 33px 34px, transparent 34px 65px, rgba(90, 95, 85, 0.28) 65px 66px, transparent 66px) 22px 31px / 98px 98px;
`;
const nodeText = css`
  font-size: 7px;
  line-height: 10px;
  color: #1c1c1c;
  white-space: nowrap;
`;
const Node = styled.div`
  position: absolute;
  left: ${(p) => p.$x}px;
  top: ${(p) => p.$y}px;
  display: flex;
  width: ${(p) => p.$w}px;
  height: ${(p) => p.$h}px;
  border: 1px solid #2c2c34;
  border-radius: 3px;
  background: linear-gradient(#aeadbb, #8d8c9b);
  box-shadow: 0 1px 2px rgba(0, 0, 0, 0.4);
  ${nodeText}
`;
const Ports = styled.div`
  display: flex;
  flex-direction: column;
  flex: ${(p) => (p.$out ? '1' : 'none')};
  width: ${(p) => p.$w}px;
  padding: 1px 2px;
`;
const Port = styled.div`
  position: relative;
  display: flex;
  flex: 1;
  align-items: center;
  justify-content: ${(p) => (p.$out ? 'flex-start' : 'flex-end')};
  &::before {
    content: "";
    position: absolute;
    ${(p) => (p.$out ? 'right: -6px' : 'left: -6px')};
    width: 5px;
    height: 5px;
    border: 1px solid #000;
    border-radius: 50%;
    background: #fff;
  }
`;
const NodeName = styled.div`
  display: flex;
  align-items: center;
  justify-content: center;
  flex: none;
  width: 17px;
  border: 1px solid #000;
  border-radius: 3px;
  background: linear-gradient(#5a5a5a, #2b2b2b);
  color: #fff;
  font-size: 9px;
  font-weight: 500;
  writing-mode: vertical-rl;
  transform: rotate(180deg);
`;
const Param = styled(Node)`
  align-items: center;
  ${Port} { justify-content: center; gap: 5px; align-self: stretch; }
  ${Port}::before { left: -5px; }
  ${Port}::after {
    content: "";
    position: absolute;
    right: -5px;
    width: 5px;
    height: 5px;
    border: 1px solid #000;
    border-radius: 50%;
    background: #fff;
  }
`;
const SliderBox = styled(Node)`
  height: 14px;
  background: linear-gradient(#e6e6e6, #c9c9c9);
  label {
    display: flex;
    align-items: center;
    justify-content: center;
    flex: none;
    width: 54px;
    border-right: 1px solid #2c2c34;
    border-radius: 2px 0 0 2px;
    background: linear-gradient(#aeadbb, #8d8c9b);
  }
  output { position: absolute; left: ${(p) => p.$vx}px; top: 1px; }
  &::after {
    content: "";
    position: absolute;
    right: -5px;
    top: 4px;
    width: 5px;
    height: 5px;
    border: 1px solid #000;
    border-radius: 50%;
    background: #fff;
  }
`;
const SliderInput = styled.input`
  appearance: none;
  width: 70px;
  height: 12px;
  margin: 0 0 0 4px;
  background:
    linear-gradient(#aaa, #aaa) 3px 6px / 64px 1px no-repeat,
    repeating-linear-gradient(90deg, #aaa 0 1px, transparent 1px 11px) 3px 3px / 64px 4px no-repeat;
  &::-webkit-slider-thumb {
    appearance: none;
    width: ${(p) => (p.$round ? 6 : 5)}px;
    height: ${(p) => (p.$round ? 6 : 5)}px;
    border: ${(p) => (p.$round ? 2 : 1)}px solid #000;
    border-radius: ${(p) => (p.$round ? '50%' : '0')};
    transform: ${(p) => (p.$round ? 'none' : 'rotate(45deg)')};
    background: #fff;
  }
`;
const GhStatus = styled.footer`
  display: flex;
  align-items: center;
  justify-content: space-between;
  flex: none;
  height: 24px;
  padding: 0 0 0 6px;
  border-top: 1px solid #ccc;
  color: #777;
  b { color: #000; }
  svg { margin-left: 22px; }
  span { display: flex; align-items: center; }
`;

const ghMenu = [['File', 37], ['Edit', 39], ['View', 44], ['Display', 57], ['Solution', 63], ['Help', 40]];
const ghTabs = [['Params', 56], ['Maths', 50], ['Sets', 39], ['Vector', 53], ['Curve', 48], ['Surface', 57], ['Mesh', 46], ['Intersect', 63], ['Transform', 72], ['Display', 56], ['Rhino', 48], ['Kangaroo2', 64]];

const sliders = [
  { x: 44, y: 95, pos: 50, text: '0.5', vx: 79, round: true },
  { x: 32, y: 113, pos: 44, text: '45', vx: 95 },
  { x: 38, y: 131, pos: 44, text: '45', vx: 95 },
  { x: 127, y: 245, pos: 0, text: '2', vx: 67 },
  { x: 132, y: 262, pos: 100, text: '10.000', vx: 99, round: true },
  { x: 640, y: 317, pos: 50, text: '5', vx: 95 },
];
const nodes = [
  { x: 225, y: 92, w: 80, h: 56, iw: 32, name: 'Square', ins: ['Plane', 'Size', 'Extent X', 'Extent Y'], outs: ['Cells', 'Points'] },
  { x: 308, y: 172, w: 73, h: 65, iw: 30, name: 'Point Charge', ins: ['Point', 'Charge', 'Decay', 'Bounds'], outs: ['Field'] },
  { x: 419, y: 219, w: 68, h: 64, iw: 25, name: 'Merge Fields', ins: ['Fields'], outs: ['Field'] },
  { x: 557, y: 154, w: 79, h: 68, iw: 23, name: 'Evaluate Field', ins: ['Field', 'Point'], outs: ['Tensor', 'Strength'] },
  { x: 574, y: 250, w: 77, h: 69, iw: 27, name: 'Vector Length', ins: ['Vector'], outs: ['Length'] },
];
const wires = [
  ['M837 305C857 305 861 316 881 316'],
  ['M825 323C851 323 855 329 881 329'],
  ['M830 341C856 341 855 342 881 342'],
  ['M864 433C915 433 915 384 964 384', 'double'],
  ['M919 455C945 455 940 414 964 414'],
  ['M924 472C968 472 922 399 964 399'],
  ['M1040 407C1068 407 1046 454 1075 454', 'double'],
  ['M1146 454C1190 454 1170 375 1213 375'],
  ['M1040 344C1130 344 1130 407 1213 407', 'double'],
  ['M1040 344C1180 344 1220 300 1364 297', 'double'],
  ['M1294 375C1373 375 1151 488 1230 488', 'double'],
  ['M1294 375C1325 375 1340 380 1364 388', 'double'],
  ['M1310 488C1330 488 1340 487 1364 486', 'double'],
  ['M964 336C984 336 974 345 991 345', 'dashed'],
  ['M964 336C1100 336 1160 340 1364 350', 'dashed'],
];

const Wires = () => (
  <Drawing fill="none">
    <g transform="translate(-657 -203)">
      {wires.map(([d, kind]) => (
        <g key={d} strokeDasharray={kind === 'dashed' ? '7 4' : undefined}>
          <path d={d} stroke="#55554f" strokeWidth={kind === 'dashed' ? 4 : kind ? 3.6 : 1.8} />
          {kind && <path d={d} stroke={kind === 'dashed' ? '#c4c0b6' : '#b5b1a8'} strokeWidth={kind === 'dashed' ? 2 : 1} strokeDasharray={kind === 'dashed' ? '5 6' : undefined} strokeDashoffset="-1" />}
        </g>
      ))}
    </g>
  </Drawing>
);

const Compass = styled.svg`
  position: absolute;
  right: 3px;
  bottom: 5px;
`;
const Recorder = styled.div`
  position: absolute;
  left: 0;
  bottom: 1px;
  width: 8px;
  height: 27px;
  border: 1px solid #000;
  background: linear-gradient(#ccc, #888);
`;
const Plug = () => <svg width="9" height="9" viewBox="0 0 9 9"><path d="M.5.5h8v8h-8z" fill="#ddd" stroke="#555" /><path d="M4.500 2v5M2.500 5l2 2 2-2" stroke="#333" fill="none" /></svg>;

const GrasshopperWindow = () => (
  <Grasshopper>
    <GhTitle>
      <span>Grasshopper - unnamed</span>
      <WinButton aria-label="Minimize"><Icon><path d="M-4 .5h10" stroke="#000" /></Icon></WinButton>
      <WinButton aria-label="Maximize"><Icon><path d="M-3.500-4.500h10v9h-10z" stroke="#000" /></Icon></WinButton>
      <WinButton aria-label="Close"><Icon><path d="M-4-5L6 5M6-5L-4 5" stroke="#000" /></Icon></WinButton>
    </GhTitle>
    <GhMenu>
      {ghMenu.map(([t, w]) => <MenuItem key={t} $w={w}>{t}</MenuItem>)}
      <span>unnamed</span>
    </GhMenu>
    <GhTabs>{ghTabs.map(([t, w]) => <GhTab key={t} $w={w} $on={t === 'Vector'}>{t}</GhTab>)}</GhTabs>
    <Ribbon>
      {groups.map(([name, cols, items]) => {
        const count = cols.split(' ').length;
        return (
          <Group key={name}>
            <GroupTools $cols={cols}>
              {items.map(([label, art], n) => (
                <GroupTool key={label} aria-label={label} $line={n % count < Math.min(count, 4) - 1}>
                  <Icon>{art}</Icon>
                </GroupTool>
              ))}
            </GroupTools>
            <GroupLabel>
              <span>{name}</span>
              <svg width="8" height="8" viewBox="0 0 8 8"><path d="M4 0v7M1 4l3 3 3-3" stroke="#999" strokeWidth="1.400" fill="none" /></svg>
            </GroupLabel>
          </Group>
        );
      })}
    </Ribbon>
    <CanvasBar>
      <IconButton aria-label="Open"><Icon><path d="M-8-2v-7h9l4 4v4" fill="#f4f4f4" stroke="#555" /><path d="M-10-2l3-2h3l2 1h11V10H-10z" fill="#7fd34c" stroke="#1e6a12" /><path d="M-9 1H8" stroke="#caf5ad" /></Icon></IconButton>
      <IconButton aria-label="Save" $w={34}><Icon><path d="M-11-10H10V11H-9l-2-2z" fill="#2880ee" stroke="#0a2c74" strokeWidth="1.400" /><path d="M-7-9H7v9H-7z" fill="#f5f5f5" /><path d="M-5-6H5M-5-3H5" stroke="#bbb" /><path d="M-6 4H5v7H-6z" fill="#ccc" stroke="#0a2c74" /><path d="M-3 6H0v4h-3z" fill="#0a2c74" /></Icon></IconButton>
      <Divider $gap={3} />
      <Zoom>
        <select aria-label="Zoom" defaultValue="65%"><option>65%</option><option>100%</option></select>
        <svg width="9" height="6"><path d="M0.500 1l4 4 4-4" stroke="#555" fill="none" /></svg>
      </Zoom>
      <IconButton aria-label="Zoom extents" $w={34}><Icon><path d="M-9-3v-6h6M9-3v-6H3M-9 4v6h6M9 4v6H3" stroke="#222" strokeWidth="4" strokeLinejoin="miter" /><path d="M-2-1.500l4 4M2-1.500l-4 4" stroke="#222" strokeWidth="1.800" /></Icon></IconButton>
      <Caret $gap={4} />
      <IconButton aria-label="Views" $w={31}><Icon><path d="M-11 0C-5-8 5-8 11 0 5 8-5 8-11 0z" fill="#f5f8fa" stroke="#222" strokeWidth="1.300" /><circle r="5.500" fill="#38a0dc" stroke="#155" /><circle r="2.500" fill="#000" /><circle cx="-1" cy="-2" r="1.200" fill="#fff" /></Icon></IconButton>
      <Caret $gap={4} />
      <IconButton aria-label="Sketch"><Icon><path d="M-9-3c4-4 6-1 3 3s-4 8-1 8 5-1 6-2" stroke="#400" strokeWidth="1.600" /><path d="M-2 7l2-8L8-9c3 3 2 6-1 10L3 6z" fill="#e03030" stroke="#700" strokeWidth=".6" /><path d="M-2 7l1-5 4 4z" fill="#f5c090" /></Icon></IconButton>
      <Push />
      <PreviewButton aria-label="No preview"><Icon><g transform="translate(0 -3) scale(.8)"><Can fill="#ddd" top="#eee" /></g><path d="M-8 4Q0 0 8 4v2Q0 14-8 6z" fill="#333" /></Icon></PreviewButton>
      <PreviewButton aria-label="Wireframe" $w={30}><Icon><g transform="rotate(40)" stroke="#444"><path d="M-6-6V6M6-6V6" /><ellipse cy="-6" rx="6" ry="4" fill="#fff" /><ellipse cy="6" rx="6" ry="4" /><ellipse cy="-6" rx="3" ry="2" /><ellipse cy="6" rx="3" ry="2" /></g></Icon></PreviewButton>
      <PreviewButton aria-label="Shaded" $on><Icon><Can fill="#c80e0e" top="#e04040" /></Icon></PreviewButton>
      <Divider $gap={8} />
      <IconButton aria-label="Selected only"><Icon><g transform="translate(2 0) scale(.9)"><Can fill="#12a0a0" top="#3cc4c0" /></g><path d="M-10-8q6-1 7 6T6 9" stroke="#222" strokeWidth="1.200" /></Icon></IconButton>
      <IconButton aria-label="Document preview"><Icon><Can fill="#ccc" top="#8cd030" /><path d="M-5-8L8 4l2-7-7-6z" fill="#6cb820" /><path d="M-10-6L8 9" stroke="#222" /></Icon></IconButton>
      <IconButton aria-label="Preview quality"><Icon><circle r="9.500" fill="#ddd" stroke="#555" /><path d="M0-9.500a9.500 9.500 0 000 19z" fill="#f09828" /><path d="M0-9V9" stroke="#733" /></Icon></IconButton>
      <Divider $gap={3} />
      <IconButton aria-label="Mesh settings" $w={27}><Icon><path d="M-9-1l4-7 8-1 6 6-1 8-7 4-8-3z" fill="#7cb4f4" stroke="#163a84" strokeWidth="1.300" /><path d="M-5-4l4-3 6 2-4 5z" fill="#cde4ff" /></Icon></IconButton>
      <Caret $gap={4} />
    </CanvasBar>
    <Canvas>
      <Sheet />
      <GridLines />
      <Wires />
      {nodes.map((n) => (
        <Node key={n.name} $x={n.x} $y={n.y} $w={n.w} $h={n.h}>
          <Ports $w={n.iw}>{n.ins.map((t) => <Port key={t}>{t}</Port>)}</Ports>
          <NodeName>{n.name}</NodeName>
          <Ports $out>{n.outs.map((t) => <Port key={t} $out>{t}</Port>)}</Ports>
        </Node>
      ))}
      {sliders.map((s, n) => (
        <SliderBox key={n} $x={s.x} $y={s.y} $w={134} $vx={s.vx}>
          <label htmlFor={`slider${n}`}>Number Slider</label>
          <SliderInput id={`slider${n}`} type="range" defaultValue={s.pos} $round={s.round} />
          <output>{s.text}</output>
        </SliderBox>
      ))}
      <Param $x={172} $y={223} $w={34} $h={14}><Port>Point</Port></Param>
      <Param $x={335} $y={135} $w={47} $h={14}><Port><Plug />Point</Port></Param>
      <Compass width="54" height="52" viewBox="-28 -28 54 52">
        <path d="M-20-8A20 20 0 0121-5" stroke="#000" strokeWidth="4" fill="none" strokeDasharray="9 4" />
        <path d="M-26-18h6l3 3-4 5z" fill="#000" />
        <circle r="19.500" fill="url(#ball)" stroke="#222" strokeWidth="2" />
        <circle r="18.500" fill="none" stroke="#fff" strokeWidth="2" />
        <path d="M-17-7l2-5 4 5zM6-16l6 3-4 4zM17 7l-5 3 3 4zM-7 16l-5-3 3-3z" fill="#fff" />
      </Compass>
      <Recorder />
    </Canvas>
    <GhStatus>
      <b>...</b>
      <span>1.0.0008<svg width="13" height="13" fill="#aaa"><path d="M9 1h2v2H9zM5 5h2v2H5zM9 5h2v2H9zM1 9h2v2H1zM5 9h2v2H5zM9 9h2v2H9z" /></svg></span>
    </GhStatus>
  </Grasshopper>
);

/* ---------- Taskbar ---------- */

const Taskbar = styled.footer`
  display: flex;
  align-items: stretch;
  flex: none;
  height: 40px;
  background: #1f1f1f;
  color: #fff;
  font-size: 14px;
  white-space: nowrap;
`;
const Search = styled.label`
  display: flex;
  align-items: center;
  gap: 11px;
  width: 288px;
  padding-left: 11px;
  border: 1px solid #555;
  border-bottom: 0;
  background: #333;
  input { border: 0; outline: 0; padding: 0; width: 220px; background: transparent; }
  input::placeholder { color: #ddd; opacity: 1; }
`;
const TaskButton = styled.button`
  position: relative;
  display: flex;
  align-items: center;
  justify-content: center;
  width: ${(p) => p.$w || 49}px;
  background: ${(p) => p.$bg || 'transparent'};
  &::after {
    content: "";
    position: absolute;
    bottom: 0;
    width: ${(p) => (p.$bg ? '100%' : '40px')};
    height: 2px;
    background: ${(p) => p.$line || 'transparent'};
  }
`;
const Tray = styled.div`
  display: flex;
  align-items: center;
  margin-left: auto;
  padding-right: 20px;
`;
const Weather = styled.span`
  display: flex;
  align-items: center;
  gap: 9px;
  margin-right: 19px;
  font-size: 13px;
`;
const TrayButton = styled.button`
  display: flex;
  align-items: center;
  justify-content: center;
  width: ${(p) => p.$w || 24}px;
  height: 40px;
  font-size: 12px;
`;
const Clock = styled.span`
  width: 78px;
  font-size: 12px;
  line-height: 18px;
  text-align: center;
`;
const underline = '#76b9ed';

const Bar = () => (
  <Taskbar>
    <TaskButton $w={48} aria-label="Start"><svg width="16" height="16" viewBox="0 0 16 16" fill="#fff"><path d="M0 2l7-1v6.500H0zM8 1l8-1v7.500H8zM0 8.500h7V15l-7-1zM8 8.500h8V16l-8-1z" /></svg></TaskButton>
    <Search>
      <svg width="17" height="17" viewBox="0 0 17 17" fill="none" stroke="#fff" strokeWidth="1.400"><circle cx="10.500" cy="6.500" r="5.500" /><path d="M6.500 10.500L1 16" /></svg>
      <input type="text" aria-label="Search" placeholder="Type here to search" />
    </Search>
    <TaskButton aria-label="Task view" $w={51}><Icon><path d="M-9-8v3h10v-3M-9 8V5H1v3M-9-3H1V3H-9z" stroke="#fff" strokeWidth="1.200" /><path d="M6-8v16" stroke="#fff" /><path d="M4.500-4h3v3h-3z" fill="#fff" /></Icon></TaskButton>
    <TaskButton aria-label="Edge" $w={48} $bg="#a9612b" $line="#ff7a00"><Icon><circle r="12" fill="url(#edge)" /><path d="M-12 0C-10-6-4-6-1-3-6 0-5 8 3 11-5 14-12 8-12 0z" fill="#0d5fb4" /><path d="M-1-3C3-3 4 1 2 4c3 3 7 2 9 0-2 6-6 7-8 7C-5 8-6 0-1-3z" fill="#1a84dc" /><path d="M-1-3C3-4 5 1 2 4-1 4-2 1-1-3z" fill="#a9612b" /></Icon></TaskButton>
    <TaskButton aria-label="Explorer" $line={underline}><Icon><path d="M-11-9h8l2 2h12V9H-11z" fill="#f9a91c" /><path d="M-11-6h22V8H-11z" fill="#ffd868" /><path d="M-7 9V1H7v8H3V5h-6v4z" fill="#3a96dd" /></Icon></TaskButton>
    <TaskButton aria-label="Mail"><Icon><path d="M-12-2L0-11 12-2v4h-24z" fill="#0b62b4" /><path d="M-10-3H10L0 6z" fill="#f5f5f5" /><path d="M-12-2L0 5l12-7V11h-24z" fill="#1f9fe8" /><path d="M-12 11L12-2v13z" fill="#46c8f8" /></Icon></TaskButton>
    <TaskButton aria-label="Snipping" $line={underline}><Icon><ellipse cx="-2" cy="-1" rx="12" ry="6" fill="#888" transform="rotate(-20)" /><ellipse cx="0" cy="-4" rx="11" ry="6.500" fill="#eee" stroke="#d83030" strokeWidth="1.400" transform="rotate(-18)" /><path d="M-2-7L5 5M6-5L-3 1" stroke="#888" strokeWidth="1.400" /><circle cx="3" cy="8" r="2.500" stroke="#2a8cd8" strokeWidth="1.600" /><circle cx="9" cy="4" r="2.500" stroke="#2a8cd8" strokeWidth="1.600" /></Icon></TaskButton>
    <TaskButton aria-label="Rhino" $w={46} $bg="#505050" $line={underline}><RhinoMark size={24} /></TaskButton>
    <TaskButton aria-label="Notepad" $w={54} $line={underline}><Icon><path d="M-10 7L-4-10H10L7 11z" fill="#e8e0c8" /><path d="M-11 6L-5-9H9L4 8z" fill="#6cc4cc" /><path d="M-8 2L-4-8 8-9z" fill="#b4e8ec" /><path d="M-4-10H9" stroke="#ccc" strokeWidth="2" /></Icon></TaskButton>
    <TaskButton aria-label="Capture" $w={46} $line={underline}><Icon><path d="M-6-10H10V6l-4 4H-10V-6z" fill="#1768f0" stroke="#fff" /><path d="M5-4H0a4 4 0 000 8h5" stroke="#fff" strokeWidth="2" /></Icon></TaskButton>
    <Tray>
      <Weather><svg width="22" height="22"><circle cx="11" cy="11" r="10" fill="url(#sun)" /></svg><span>72°F&nbsp; Sunny</span></Weather>
      <TrayButton aria-label="Show hidden"><Icon><path d="M-6 3l6-6 6 6" stroke="#fff" strokeWidth="1.400" /></Icon></TrayButton>
      <TrayButton aria-label="Meet now"><Icon><path d="M-4-4h7v8h-7zM3-1l3-2v6L3 1M-4-7q4-2 8 0M-4 7q4 2 8 0" stroke="#fff" /></Icon></TrayButton>
      <TrayButton aria-label="Battery"><Icon><path d="M-3-3H6V4H-5V2M6-1h2v3H6" stroke="#fff" /><path d="M-2-2h7v5h-7z" fill="#fff" /><path d="M-7-5v3M-4-5v3M-8-3h6v2l-2 1h-2l-2-1zM-5 0v3" stroke="#fff" /></Icon></TrayButton>
      <TrayButton aria-label="Network"><Icon><circle r="7.500" stroke="#fff" /><ellipse rx="3.500" ry="7.500" stroke="#fff" /><path d="M-7-2.500H7M-7 2.500H7" stroke="#fff" /><circle cx="5" cy="5" r="3.500" fill="#1f1f1f" stroke="#fff" /><path d="M3 3l4 4" stroke="#fff" /></Icon></TrayButton>
      <TrayButton aria-label="Volume"><Icon><path d="M-8-2h3l4-4V6l-4-4h-3zM2-2q1.500 2 0 4M4.500-4q3 4 0 8M7-6q4.500 6 0 12" stroke="#fff" /></Icon></TrayButton>
      <TrayButton $w={30}>ENG</TrayButton>
      <Clock>4:20 AM<br />10/29/2024</Clock>
      <TrayButton aria-label="Notifications"><Icon><path d="M-7.500-7.500h15v12H4l-3 3-3-3h-5.500z" stroke="#fff" strokeWidth="1.200" /></Icon></TrayButton>
    </Tray>
  </Taskbar>
);

export default function App() {
  return (
    <Screen>
      <Global />
      <Gradients />
      <Desktop>
        <RhinoWindow />
        <GrasshopperWindow />
      </Desktop>
      <Bar />
    </Screen>
  );
}
